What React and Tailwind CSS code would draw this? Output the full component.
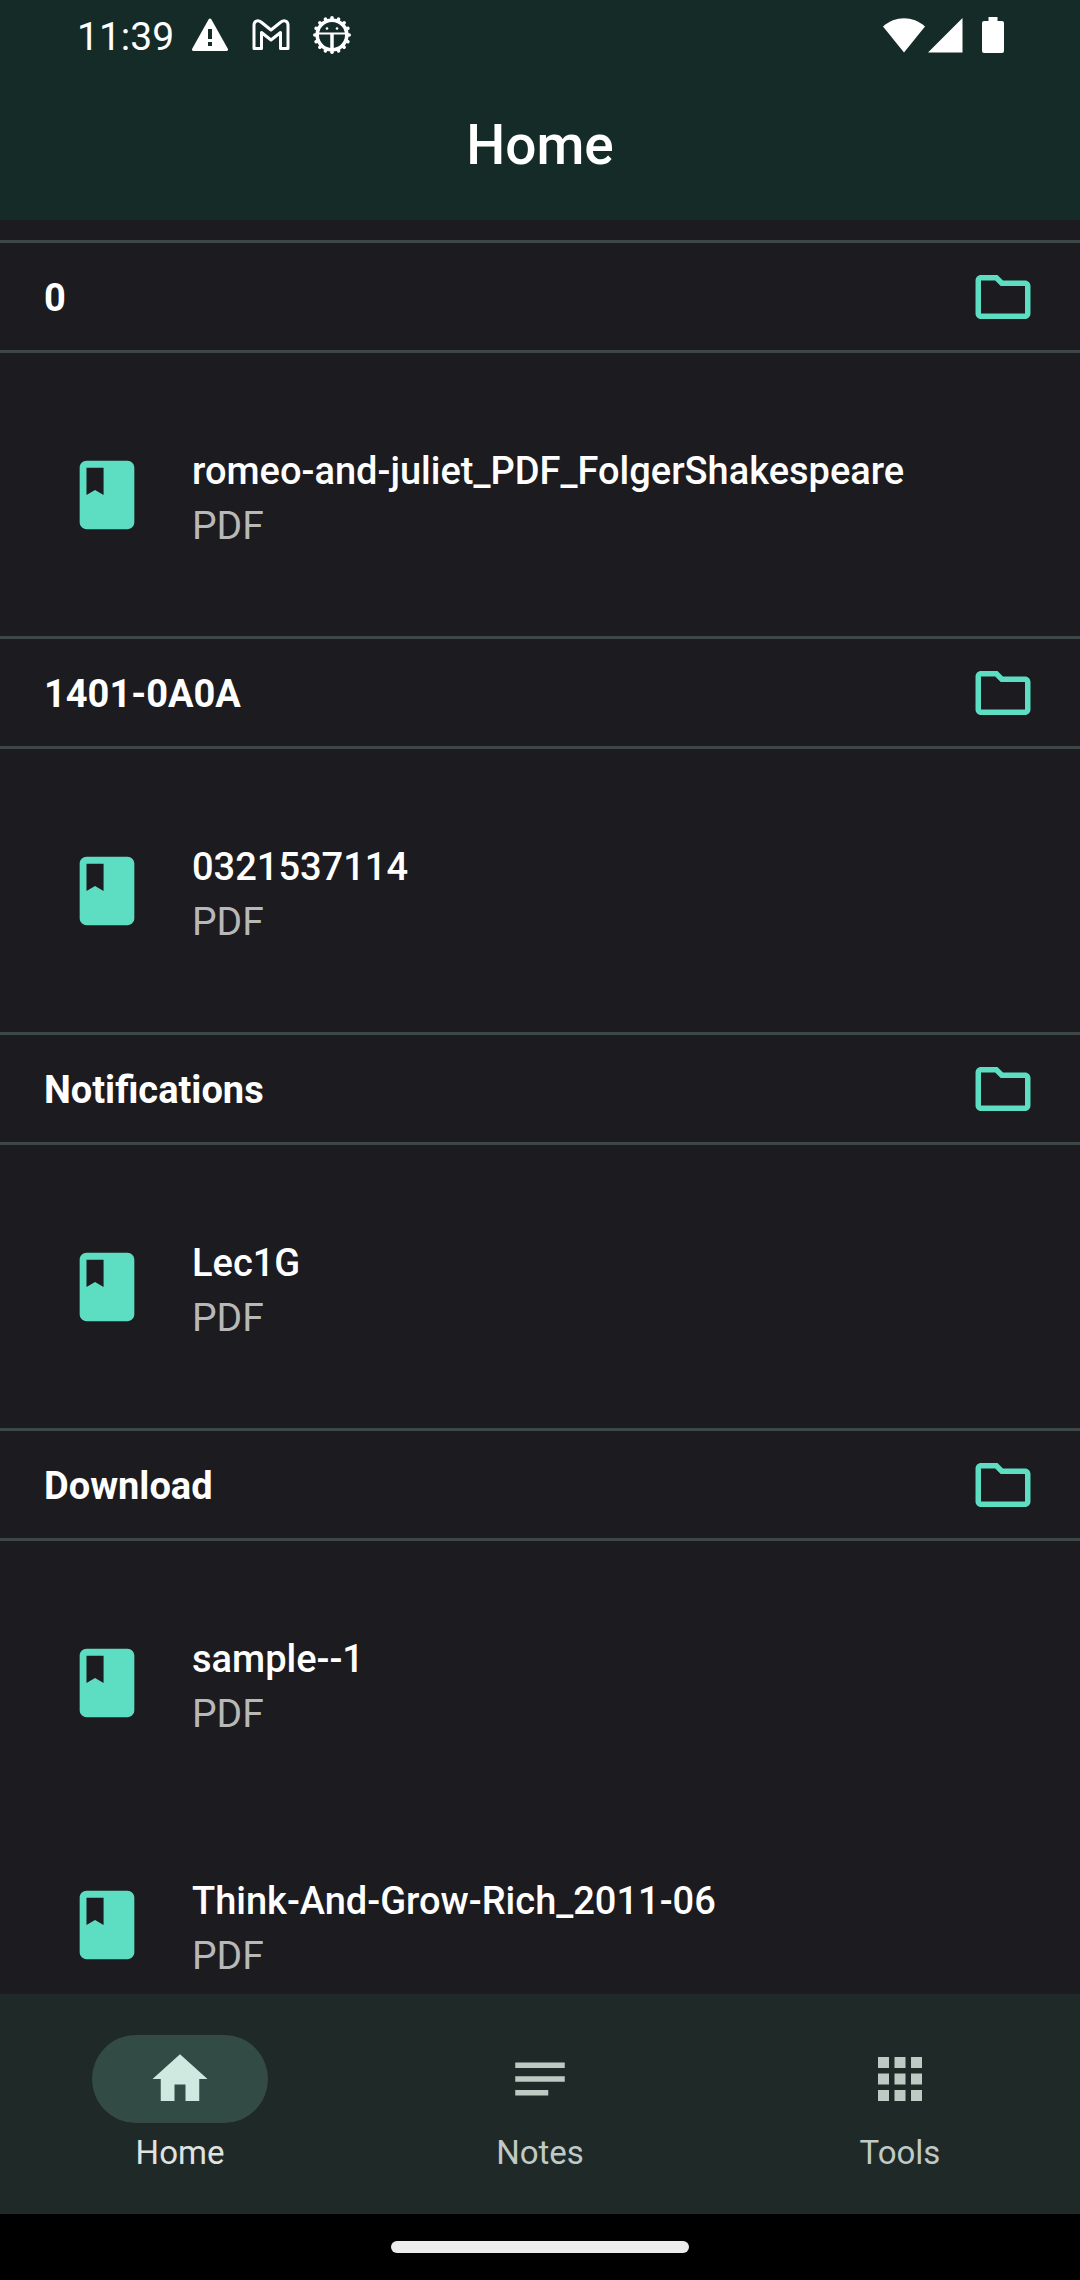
import React, { useState } from "react";
import { MdApps, MdBook, MdHome, MdNotes, MdOutlineFolder } from "react-icons/md";

const folders = [
  { name: "0", files: ["romeo-and-juliet_PDF_FolgerShakespeare"] },
  { name: "1401-0A0A", files: ["0321537114"] },
  { name: "Notifications", files: ["Lec1G"] },
  { name: "Download", files: ["sample--1", "Think-And-Grow-Rich_2011-06"] },
];

const tabs = [
  { name: "Home", icon: MdHome },
  { name: "Notes", icon: MdNotes },
  { name: "Tools", icon: MdApps },
];

const teeth = Array.from({ length: 16 }, (_, i) => i * 22.5);

function StatusBar() {
  return (
    <div className="flex h-[66px] items-center justify-between pt-1 pr-[76px] pl-[77px] text-white">
      <div className="flex items-center">
        <span className="pt-[3px] text-[39px] leading-[44px]">11:39</span>
        <svg className="ml-[18px] h-9 w-9" viewBox="0 0 36 36" fill="none">
          <path d="M18 3 34.500 32.500H1.500Z" fill="currentColor" stroke="currentColor" strokeWidth="3" strokeLinejoin="round" />
          <path d="M18 12v10M18 25v4" stroke="#152b28" strokeWidth="4" />
        </svg>
        <svg className="ml-6 h-9 w-[38px]" viewBox="0 0 38 36" fill="none" stroke="currentColor" strokeWidth="3" strokeLinejoin="round">
          <path d="M2 31.500V8C2 4 6 2.500 9 5L19 13 29 5C32 2.500 36 4 36 8V31.500H28.500V15.500L19 23 9.500 15.500V31.500Z" />
        </svg>
        <svg className="ml-[22px] h-10 w-10" viewBox="0 0 40 40" fill="none" stroke="currentColor">
          <circle cx="20" cy="20" r="14.800" strokeWidth="3.600" />
          {teeth.map((angle) => (
            <path key={angle} d="M20 2.800V5" strokeWidth="3.600" strokeLinecap="round" transform={`rotate(${angle} 20 20)`} />
          ))}
          <path d="M6 18.500H34" strokeWidth="2" />
          <path d="M20 19V34" strokeWidth="3.500" />
          <circle cx="15" cy="13.500" r="1.300" fill="currentColor" stroke="none" />
          <circle cx="25" cy="13.500" r="1.300" fill="currentColor" stroke="none" />
        </svg>
      </div>
      <div className="flex items-center">
        <svg className="h-9 w-[42px]" viewBox="0 0 42 36" fill="currentColor">
          <path d="M0 9.500C12-1.500 30-1.500 42 9.500L21 35.500Z" />
        </svg>
        <svg className="ml-[3px] h-9 w-[35px]" viewBox="0 0 35 36" fill="currentColor">
          <path d="M0 35.500 34.500 1V35.500Z" />
        </svg>
        <svg className="ml-[19px] h-9 w-[22px]" viewBox="0 0 22 36" fill="currentColor">
          <path d="M6.500 0h9v4H20a2 2 0 0 1 2 2V34a2 2 0 0 1-2 2H2a2 2 0 0 1-2-2V6a2 2 0 0 1 2-2h4.500Z" />
        </svg>
      </div>
    </div>
  );
}

function FileRow({ name }) {
  return (
    <li>
      <a href="#file" className="flex h-[242px] items-center gap-[44px] pr-11 pl-[66px]">
        <MdBook className="size-[82px] shrink-0 text-[#5ddec2]" />
        <span className="flex min-w-0 flex-col pt-[8px] leading-[55px]">
          <span className="truncate text-[38px] font-medium text-white">{name}</span>
          <span className="text-[39px] text-[#b8b8b9]">PDF</span>
        </span>
      </a>
    </li>
  );
}

function Folder({ name, files }) {
  return (
    <section>
      <div className="flex h-[113px] items-center justify-between border-y-[3px] border-[#3d4745] px-11">
        <h2 className="pt-1 text-[38px] leading-[55px] font-bold text-white">{name}</h2>
        <button type="button" aria-label={"Open " + name}>
          <MdOutlineFolder className="size-[66px] text-[#5ddec2]" />
        </button>
      </div>
      <ul className="pt-[21px] pb-[20px]">
        {files.map((file) => (
          <FileRow key={file} name={file} />
        ))}
      </ul>
    </section>
  );
}

function BottomNav() {
  const [active, setActive] = useState("Home");

  return (
    <nav className="flex h-[220px] shrink-0 bg-[#1f2a28]">
      {tabs.map(({ name, icon: Icon }) => (
        <button
          key={name}
          type="button"
          onClick={() => setActive(name)}
          className="flex flex-1 flex-col items-center gap-[8px] pt-[41px]"
        >
          <span
            className={
              active === name
                ? "flex h-[88px] w-[176px] items-center justify-center rounded-full bg-[#334b45] text-[#cfe9e0]"
                : "flex h-[88px] w-[176px] items-center justify-center rounded-full text-[#bfc9c4]"
            }
          >
            <Icon className="size-[66px]" />
          </span>
          <span className={active === name ? "text-[33px] leading-[44px] text-[#e0e3e1]" : "text-[33px] leading-[44px] text-[#bfc9c6]"}>
            {name}
          </span>
        </button>
      ))}
    </nav>
  );
}

export default function App() {
  return (
    <div className="flex h-screen flex-col bg-[#1c1b1f] font-[Roboto,sans-serif]">
      <header className="shrink-0 bg-[#152b28]">
        <StatusBar />
        <div className="flex h-[154px] items-center justify-center pt-1">
          <h1 className="text-[55px] leading-[66px] font-medium text-white">Home</h1>
        </div>
      </header>
      <main className="min-h-0 flex-1 overflow-y-auto pt-[20px] [scrollbar-width:none]">
        {folders.map((folder) => (
          <Folder key={folder.name} name={folder.name} files={folder.files} />
        ))}
      </main>
      <BottomNav />
      <div className="flex h-[66px] shrink-0 items-center justify-center bg-black">
        <div className="h-3 w-[298px] rounded-full bg-[#ececec]" />
      </div>
    </div>
  );
}
